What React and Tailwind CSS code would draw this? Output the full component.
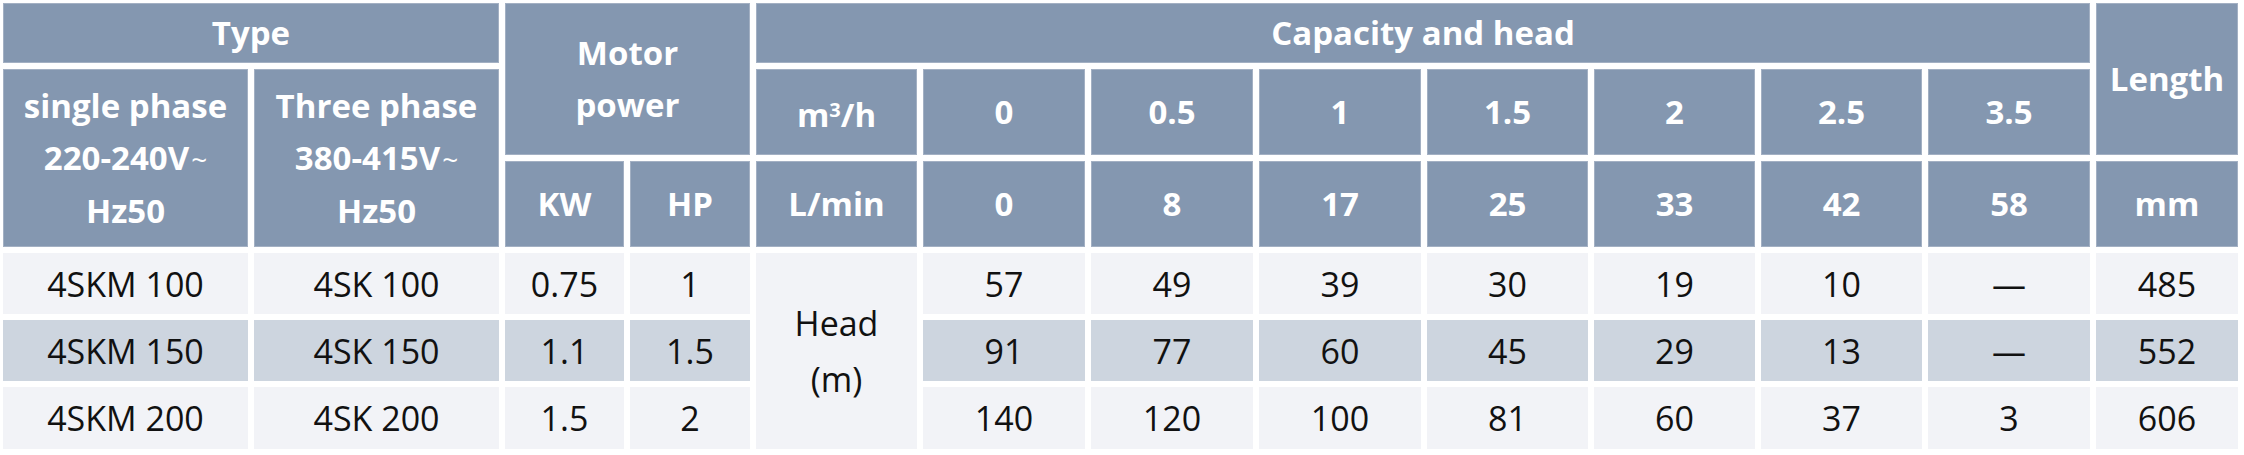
import React from 'react';

const head = "flex items-center justify-center text-center bg-[#8497b0] border border-[#a3b0c3] text-white font-bold text-[33px] leading-[52px]";
const light = "flex items-center justify-center text-center bg-[#f2f3f7] text-[#111] text-[34px] leading-[52px]";
const mid = "flex items-center justify-center text-center bg-[#cdd5df] text-[#111] text-[34px] leading-[52px]";

const colStart = ['col-start-1', 'col-start-2', 'col-start-3', 'col-start-4', 'col-start-5', 'col-start-6', 'col-start-7', 'col-start-8', 'col-start-9', 'col-start-10', 'col-start-11', 'col-start-12', 'col-start-13'];

const flows = ['0', '0.5', '1', '1.5', '2', '2.5', '3.5'];
const lmin = ['0', '8', '17', '25', '33', '42', '58'];

const rows = [
  { row: 'row-start-4', single: '4SKM 100', three: '4SK 100', kw: '0.75', hp: '1', heads: ['57', '49', '39', '30', '19', '10', '—'], len: '485' },
  { row: 'row-start-5', single: '4SKM 150', three: '4SK 150', kw: '1.1', hp: '1.5', heads: ['91', '77', '60', '45', '29', '13', '—'], len: '552' },
  { row: 'row-start-6', single: '4SKM 200', three: '4SK 200', kw: '1.5', hp: '2', heads: ['140', '120', '100', '81', '60', '37', '3'], len: '606' },
];

export default function App() {
  return (
    <div className="w-[2244px] h-[455px] bg-white p-[3px] font-['Open_Sans',sans-serif]">
      <div className="grid grid-cols-[245px_245px_119px_120px_161px_162px_162px_162px_161px_161px_161px_162px_142px] grid-rows-[60px_86px_86px_61px_61px_62px] gap-[6px]">
        {/* header row 1 */}
        <div className={`${head} col-start-1 col-span-2 row-start-1`}>Type</div>
        <div className={`${head} col-start-3 col-span-2 row-start-1 row-span-2 flex-col`}>
          <span>Motor</span>
          <span>power</span>
        </div>
        <div className={`${head} col-start-5 col-span-8 row-start-1`}>Capacity and head</div>
        <div className={`${head} col-start-13 row-start-1 row-span-2`}>Length</div>

        {/* header rows 2-3 */}
        <div className={`${head} col-start-1 row-start-2 row-span-2 flex-col`}>
          <span>single phase</span>
          <span>220-240V<span className="text-[28px] font-normal ml-[2px]">~</span></span>
          <span>Hz50</span>
        </div>
        <div className={`${head} col-start-2 row-start-2 row-span-2 flex-col`}>
          <span>Three phase</span>
          <span>380-415V<span className="text-[28px] font-normal ml-[2px]">~</span></span>
          <span>Hz50</span>
        </div>
        <div className={`${head} col-start-5 row-start-2`}>
          <span>m<span className="text-[20px] align-[10px]">3</span>/h</span>
        </div>
        {flows.map((f, j) => (
          <div key={f} className={`${head} ${colStart[5 + j]} row-start-2`}>{f}</div>
        ))}

        <div className={`${head} col-start-3 row-start-3`}>KW</div>
        <div className={`${head} col-start-4 row-start-3`}>HP</div>
        <div className={`${head} col-start-5 row-start-3`}>L/min</div>
        {lmin.map((v, j) => (
          <div key={j} className={`${head} ${colStart[5 + j]} row-start-3`}>{v}</div>
        ))}
        <div className={`${head} col-start-13 row-start-3`}>mm</div>

        {/* data */}
        <div className={`${light} col-start-5 row-start-4 row-span-3 flex-col leading-[56px]`}>
          <span>Head</span>
          <span>(m)</span>
        </div>
        {rows.map((r, i) => {
          const c = i === 1 ? mid : light;
          return (
            <React.Fragment key={r.single}>
              <div className={`${c} col-start-1 ${r.row}`}>{r.single}</div>
              <div className={`${c} col-start-2 ${r.row}`}>{r.three}</div>
              <div className={`${c} col-start-3 ${r.row}`}>{r.kw}</div>
              <div className={`${c} col-start-4 ${r.row}`}>{r.hp}</div>
              {r.heads.map((h, j) => (
                <div key={j} className={`${c} ${colStart[5 + j]} ${r.row}`}>{h}</div>
              ))}
              <div className={`${c} col-start-13 ${r.row}`}>{r.len}</div>
            </React.Fragment>
          );
        })}
      </div>
    </div>
  );
}
